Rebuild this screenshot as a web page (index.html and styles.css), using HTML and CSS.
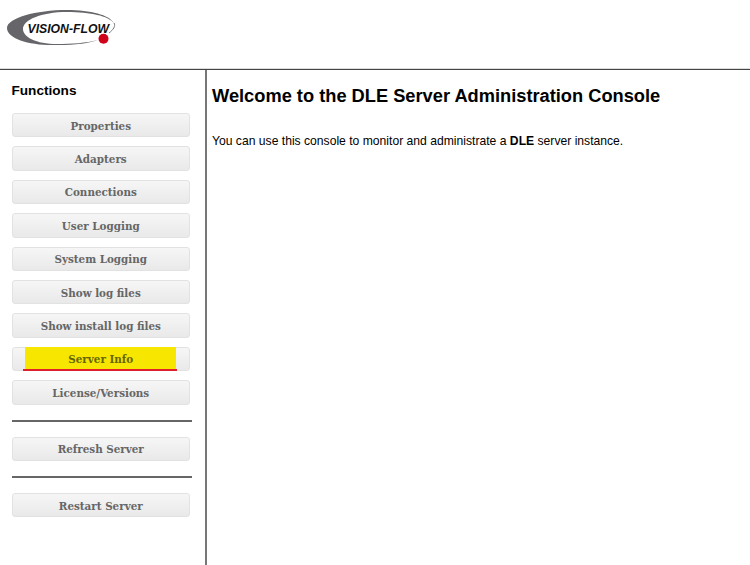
FILE: index.html
```html
<!DOCTYPE html>
<html lang="en">
<head>
<meta charset="utf-8">
<title>DLE Server Administration Console</title>
<link rel="stylesheet" href="styles.css">
</head>
<body>
<header class="top">
  <svg class="logo" width="112" height="48" viewBox="0 0 112 48">
    <path class="swoosh" d="M61 0C30 0 1 8 1 18C1 29 25 36 51 35C70 35 84 33 92 30C80 33 66 34 51 34C30 34 17 27 17 19C17 10 35 2 61 2C85 2 102 6 108 13C103 5 85 0 61 0Z"/>
    <path class="swoosh-thin" d="M108 13C110 16 107 20 103 23"/>
    <text class="logo-text" x="21.500" y="22.500" textLength="81.500" lengthAdjust="spacingAndGlyphs">VISION-FLOW</text>
    <circle class="dot" cx="97.500" cy="28.700" r="5"/>
  </svg>
</header>
<div class="main">
  <nav class="side">
    <h2 class="side-title">Functions</h2>
    <div class="group">
      <button class="btn">Properties</button>
      <button class="btn">Adapters</button>
      <button class="btn">Connections</button>
      <button class="btn">User Logging</button>
      <button class="btn">System Logging</button>
      <button class="btn">Show log files</button>
      <button class="btn">Show install log files</button>
      <button class="btn"><span class="mark">Server Info</span></button>
      <button class="btn">License/Versions</button>
    </div>
    <hr class="rule">
    <button class="btn">Refresh Server</button>
    <hr class="rule">
    <button class="btn">Restart Server</button>
  </nav>
  <main class="content">
    <h1 class="title">Welcome to the DLE Server Administration Console</h1>
    <p class="intro">You can use this console to monitor and administrate a <b>DLE</b> server instance.</p>
  </main>
</div>
</body>
</html>
```
FILE: styles.css
```css
html, body { margin: 0; padding: 0; height: 100%; background: #fff; overflow: hidden; }
body { font-family: "Liberation Sans", Arial, sans-serif; color: #000; display: flex; flex-direction: column; }
.top { height: 69px; box-sizing: border-box; padding: 10px 0 0 6px; flex: none; }
.logo { display: block; }
.swoosh { fill: #66666a; }
.swoosh-thin { fill: none; stroke: #77777b; stroke-width: 1; }
.logo-text { font: italic bold 13px "Liberation Sans", Arial, sans-serif; fill: #111; }
.dot { fill: #d0021b; }
.main { flex: 1; display: flex; border-top: 1px solid #444; min-height: 0; box-shadow: 0 -1px 0 #ddd; }
.side { width: 207px; box-sizing: border-box; flex: none; border-right: 2px solid #777; padding: 13px 13px 0 11.500px; display: flex; flex-direction: column; }
.side-title { margin: 0 0 15px; font-size: 13.600px; line-height: 15px; font-weight: bold; }
.group { display: flex; flex-direction: column; gap: 9px; }
.btn { display: flex; justify-content: center; align-items: center; width: 178.500px; height: 24.400px; box-sizing: border-box; padding: 1px 0 0; margin: 0; border: 1px solid #e2e2e2; border-radius: 3px; background: linear-gradient(#f6f6f6, #e9e9e9); color: #666; font: bold 11.500px "DejaVu Serif Condensed", "DejaVu Serif", serif; flex: none; }
.mark { display: block; position: relative; width: 151px; height: 22px; margin-top: -2px; line-height: 24px; background: #f7e600; flex: none; color: #666600; }
.mark::after { content: ""; position: absolute; left: -2px; right: -1px; bottom: -2px; height: 2.500px; background: #e0202a; }
.rule { width: 180px; margin: 15px 0 15px; border: 0; border-top: 2px solid #666; height: 0; }
.content { flex: 1; padding: 0 5px; }
.title { margin: 15px 0 0; font-size: 18.250px; line-height: 21px; font-weight: bold; }
.intro { margin: 28px 0 0; font-size: 12.150px; line-height: 15px; }
```
